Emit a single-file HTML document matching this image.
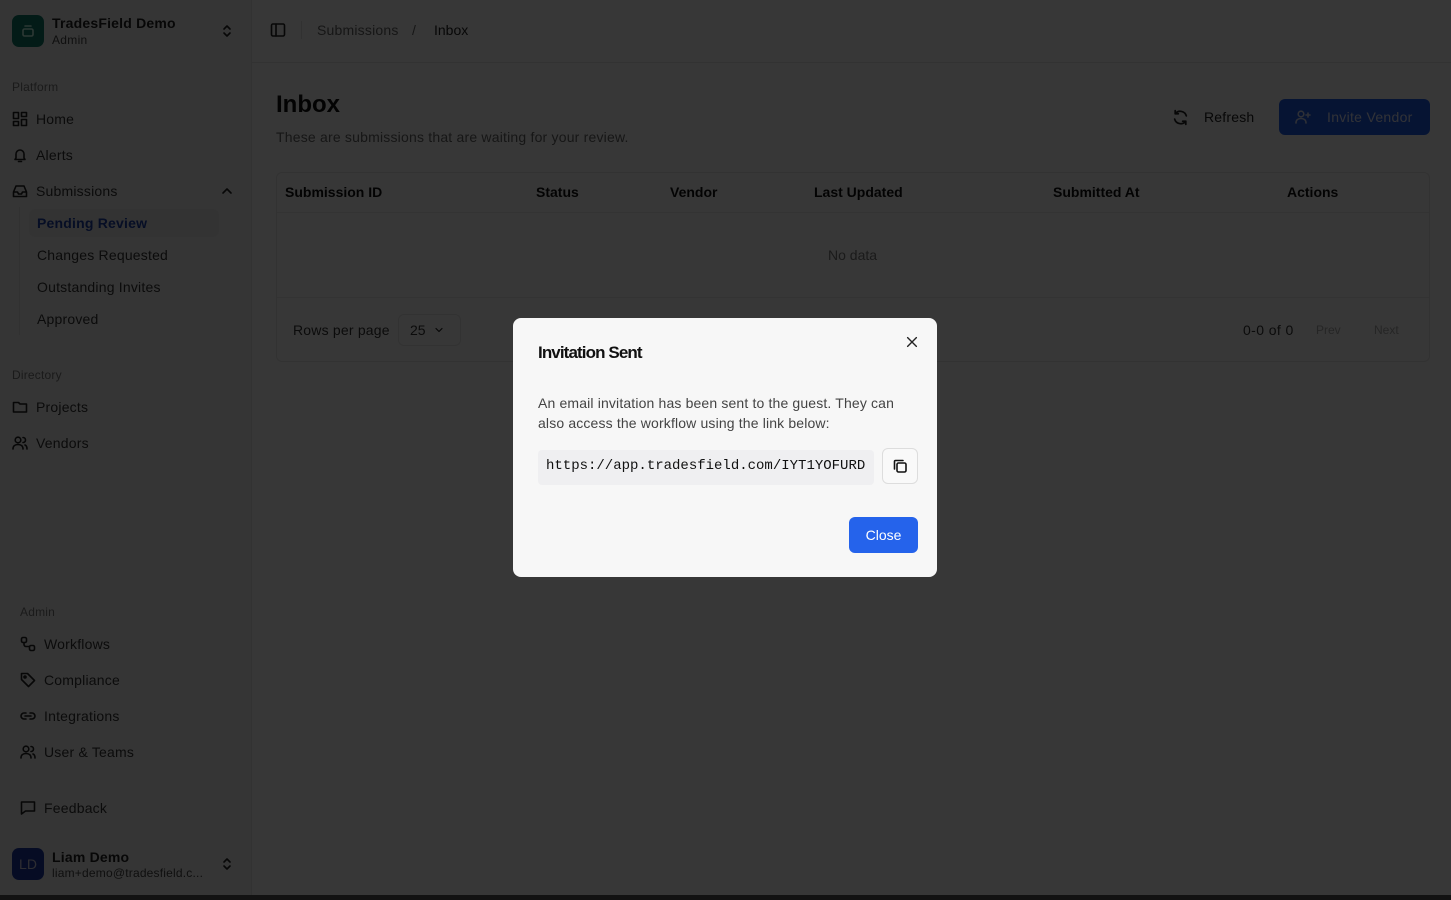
<!DOCTYPE html>
<html><head><meta charset="utf-8"><style>
*{box-sizing:border-box;margin:0;padding:0}
body{width:1451px;height:900px;overflow:hidden;font-family:"Liberation Sans",sans-serif;background:#fafafa;position:relative;color:#111}
.sb{position:absolute;left:0;top:0;width:252px;height:895px;background:#f2f2f2;border-right:1px solid #e2e2e2}
.main{position:absolute;left:252px;top:0;right:0;height:895px;background:#fafafa}
.bot{position:absolute;left:0;right:0;top:895px;height:5px;background:#555}
.t{position:absolute;white-space:nowrap}
.ic{position:absolute;width:16px;height:16px;fill:none;stroke:#222;stroke-width:1.6;stroke-linecap:round;stroke-linejoin:round}
.nav{font-size:14px;color:#333;letter-spacing:0.2px}
.grp{font-size:12px;color:#777;letter-spacing:0.2px}
.overlay{position:absolute;inset:0;background:rgba(0,0,0,0.78)}
.modal{position:absolute;left:513px;top:318px;width:424px;height:259px;background:#f7f7f7;border-radius:8px}
</style></head><body>
<div class="sb">
  <div style="position:absolute;left:12px;top:15px;width:32px;height:32px;border-radius:7px;background:#0f7a6b"></div>
  <svg class="ic" style="left:20px;top:23px;stroke:#cfe" viewBox="0 0 16 16"><rect x="3" y="6" width="10" height="7" rx="1.5"/><path d="M5 3h6"/></svg>
  <div class="t" style="left:52px;top:15px;font-size:14px;font-weight:bold;color:#222;letter-spacing:0.2px">TradesField Demo</div>
  <div class="t" style="left:52px;top:33px;font-size:12px;color:#444;letter-spacing:0.3px">Admin</div>
  <svg class="ic" style="left:219px;top:23px" viewBox="0 0 16 16"><path d="M5 6l3-3 3 3M5 10l3 3 3-3"/></svg>
  <div class="t grp" style="left:12px;top:80px">Platform</div>
  <svg class="ic" style="left:12px;top:111px" viewBox="0 0 16 16"><rect x="1.5" y="1.5" width="5" height="6"/><rect x="9.5" y="1.5" width="5" height="4"/><rect x="1.5" y="10.5" width="5" height="4"/><rect x="9.5" y="8.5" width="5" height="6"/></svg>
  <div class="t nav" style="left:36px;top:111px">Home</div>
  <svg class="ic" style="left:12px;top:147px" viewBox="0 0 16 16"><path d="M4 11V7a4 4 0 018 0v4l1 1.5H3zM6.5 14.5h3"/></svg>
  <div class="t nav" style="left:36px;top:147px">Alerts</div>
  <svg class="ic" style="left:12px;top:183px" viewBox="0 0 16 16"><path d="M1.5 9l2.5-6h8l2.5 6v4.5h-13zM1.5 9h4l1 2h3l1-2h4"/></svg>
  <div class="t nav" style="left:36px;top:183px">Submissions</div>
  <svg class="ic" style="left:219px;top:183px" viewBox="0 0 16 16"><path d="M4 10l4-4 4 4"/></svg>
  <div style="position:absolute;left:19px;top:207px;width:1px;height:128px;background:#ddd"></div>
  <div style="position:absolute;left:29px;top:209px;width:190px;height:28px;border-radius:6px;background:#e8e8e8"></div>
  <div class="t nav" style="left:37px;top:215px;color:#1e3fa8;font-weight:bold">Pending Review</div>
  <div class="t nav" style="left:37px;top:247px">Changes Requested</div>
  <div class="t nav" style="left:37px;top:279px">Outstanding Invites</div>
  <div class="t nav" style="left:37px;top:311px">Approved</div>
  <div class="t grp" style="left:12px;top:368px">Directory</div>
  <svg class="ic" style="left:12px;top:399px" viewBox="0 0 16 16"><path d="M1.5 3.5h5l1.5 1.5h6.5v8h-13z"/></svg>
  <div class="t nav" style="left:36px;top:399px">Projects</div>
  <svg class="ic" style="left:12px;top:435px" viewBox="0 0 16 16"><circle cx="6" cy="5" r="2.8"/><path d="M1 14c0-3 2-4.5 5-4.5s5 1.5 5 4.5M11 2.5a2.5 2.5 0 010 5M13 10c1.5.6 2 2 2 4"/></svg>
  <div class="t nav" style="left:36px;top:435px">Vendors</div>
  <div class="t grp" style="left:20px;top:605px">Admin</div>
  <svg class="ic" style="left:20px;top:636px" viewBox="0 0 16 16"><rect x="1.5" y="1.5" width="5" height="5" rx="1.5"/><rect x="9.5" y="9.5" width="5" height="5" rx="1.5"/><path d="M4 6.5v2a2 2 0 002 2h3.5"/></svg>
  <div class="t nav" style="left:44px;top:636px">Workflows</div>
  <svg class="ic" style="left:20px;top:672px" viewBox="0 0 16 16"><path d="M1.5 1.5h6l7 7-6 6-7-7z"/><circle cx="5" cy="5" r="1"/></svg>
  <div class="t nav" style="left:44px;top:672px">Compliance</div>
  <svg class="ic" style="left:20px;top:708px" viewBox="0 0 16 16"><path d="M6 5H4a3 3 0 000 6h2M10 5h2a3 3 0 010 6h-2M5 8h6"/></svg>
  <div class="t nav" style="left:44px;top:708px">Integrations</div>
  <svg class="ic" style="left:20px;top:744px" viewBox="0 0 16 16"><circle cx="6" cy="5" r="2.8"/><path d="M1 14c0-3 2-4.5 5-4.5s5 1.5 5 4.5M11 2.5a2.5 2.5 0 010 5M13 10c1.5.6 2 2 2 4"/></svg>
  <div class="t nav" style="left:44px;top:744px">User &amp; Teams</div>
  <svg class="ic" style="left:20px;top:800px" viewBox="0 0 16 16"><path d="M1.5 2h13v9h-9l-4 3z"/></svg>
  <div class="t nav" style="left:44px;top:800px">Feedback</div>
  <div style="position:absolute;left:12px;top:848px;width:32px;height:32px;border-radius:7px;background:#1b3aa6;color:#ccd;font-size:14px;line-height:32px;text-align:center">LD</div>
  <div class="t" style="left:52px;top:849px;font-size:14px;font-weight:bold;color:#222;letter-spacing:0.2px">Liam Demo</div>
  <div class="t" style="left:52px;top:866px;font-size:12px;color:#444;letter-spacing:0.2px">liam+demo@tradesfield.c...</div>
  <svg class="ic" style="left:219px;top:856px" viewBox="0 0 16 16"><path d="M5 6l3-3 3 3M5 10l3 3 3-3"/></svg>
</div>
<div class="main">
  <svg class="ic" style="left:18px;top:22px" viewBox="0 0 16 16"><rect x="1.5" y="2" width="13" height="12" rx="1.5"/><path d="M6 2v12"/></svg>
  <div style="position:absolute;left:49px;top:21px;width:1px;height:18px;background:#ddd"></div>
  <div class="t" style="left:65px;top:22px;font-size:14px;color:#666;letter-spacing:0.2px">Submissions</div>
  <div class="t" style="left:160px;top:22px;font-size:14px;color:#666">/</div>
  <div class="t" style="left:182px;top:22px;font-size:14px;color:#222">Inbox</div>
  <div style="position:absolute;left:0;right:0;top:62px;height:1px;background:#e5e5e5"></div>
  <div class="t" style="left:24px;top:91px;font-size:24px;font-weight:bold;color:#111">Inbox</div>
  <div class="t" style="left:24px;top:129px;font-size:14px;color:#666;letter-spacing:0.2px">These are submissions that are waiting for your review.</div>
  <svg class="ic" style="left:920px;top:109px;width:17px;height:17px" viewBox="0 0 16 16"><path d="M13.5 6.5A6 6 0 003 4.5M2.5 9.5A6 6 0 0013 11.5M3 1.5v3h3M13 14.5v-3h-3"/></svg>
  <div class="t" style="left:952px;top:109px;font-size:14px;color:#222;letter-spacing:0.2px">Refresh</div>
  <div style="position:absolute;left:1027px;top:99px;width:151px;height:36px;border-radius:6px;background:#1f5be6"></div>
  <svg class="ic" style="left:1043px;top:109px;stroke:#cfd8f5" viewBox="0 0 16 16"><circle cx="6" cy="5" r="2.8"/><path d="M1 14c0-3 2-4.5 5-4.5s5 1.5 5 4.5M13 4v4M11 6h4"/></svg>
  <div class="t" style="left:1075px;top:109px;font-size:14px;color:#dde4f8;letter-spacing:0.3px">Invite Vendor</div>
  <div style="position:absolute;left:24px;top:172px;width:1154px;height:190px;border:1px solid #e5e5e5;border-radius:6px;background:#fafafa">
    <div style="position:absolute;left:0;right:0;top:39px;height:1px;background:#e8e8e8"></div>
    <div style="position:absolute;left:0;right:0;top:124px;height:1px;background:#e8e8e8"></div>
    <div class="t" style="left:8px;top:11px;font-size:14px;font-weight:bold">Submission ID</div>
    <div class="t" style="left:259px;top:11px;font-size:14px;font-weight:bold">Status</div>
    <div class="t" style="left:393px;top:11px;font-size:14px;font-weight:bold">Vendor</div>
    <div class="t" style="left:537px;top:11px;font-size:14px;font-weight:bold">Last Updated</div>
    <div class="t" style="left:776px;top:11px;font-size:14px;font-weight:bold">Submitted At</div>
    <div class="t" style="left:1010px;top:11px;font-size:14px;font-weight:bold">Actions</div>
    <div class="t" style="left:551px;top:74px;font-size:14px;color:#777">No data</div>
    <div class="t" style="left:16px;top:149px;font-size:14px;color:#333;letter-spacing:0.2px">Rows per page</div>
    <div style="position:absolute;left:121px;top:141px;width:63px;height:32px;border:1px solid #e5e5e5;border-radius:6px"></div>
    <div class="t" style="left:133px;top:149px;font-size:14px;color:#333">25</div>
    <svg class="ic" style="left:156px;top:151px;width:12px;height:12px" viewBox="0 0 16 16"><path d="M4 6l4 4 4-4"/></svg>
    <div class="t" style="left:966px;top:149px;font-size:14px;color:#333;letter-spacing:0.4px">0-0 of 0</div>
    <div class="t" style="left:1039px;top:150px;font-size:12px;color:#aaa">Prev</div>
    <div class="t" style="left:1097px;top:150px;font-size:12px;color:#aaa">Next</div>
  </div>
</div>
<div class="bot"></div>
<div class="overlay"></div>
<div class="modal">
  <div class="t" style="left:25px;top:25px;font-size:17px;font-weight:bold;color:#111;letter-spacing:-0.9px">Invitation Sent</div>
  <svg class="ic" style="left:392px;top:17px;width:14px;height:14px;stroke:#222" viewBox="0 0 16 16"><path d="M3 3l10 10M13 3L3 13"/></svg>
  <div class="t" style="left:25px;top:75px;font-size:14px;line-height:20px;color:#444;letter-spacing:0.15px">An email invitation has been sent to the guest. They can<br>also access the workflow using the link below:</div>
  <div style="position:absolute;left:25px;top:132px;width:336px;height:35px;background:#efeff1;border-radius:4px"></div>
  <div class="t" style="left:33px;top:140px;font-family:'Liberation Mono',monospace;font-size:14px;color:#111">https://app.tradesfield.com/IYT1YOFURD</div>
  <div style="position:absolute;left:369px;top:130px;width:36px;height:36px;border:1px solid #ddd;border-radius:6px;background:#f9f9f9"></div>
  <svg class="ic" style="left:379px;top:140px;stroke:#111" viewBox="0 0 16 16"><rect x="5" y="5" width="9" height="9" rx="1.5"/><path d="M11 2.5H3.5a1 1 0 00-1 1V11"/></svg>
  <div style="position:absolute;left:336px;top:199px;width:69px;height:36px;border-radius:6px;background:#2563eb;color:#fff;font-size:14px;line-height:36px;text-align:center">Close</div>
</div>
</body></html>
